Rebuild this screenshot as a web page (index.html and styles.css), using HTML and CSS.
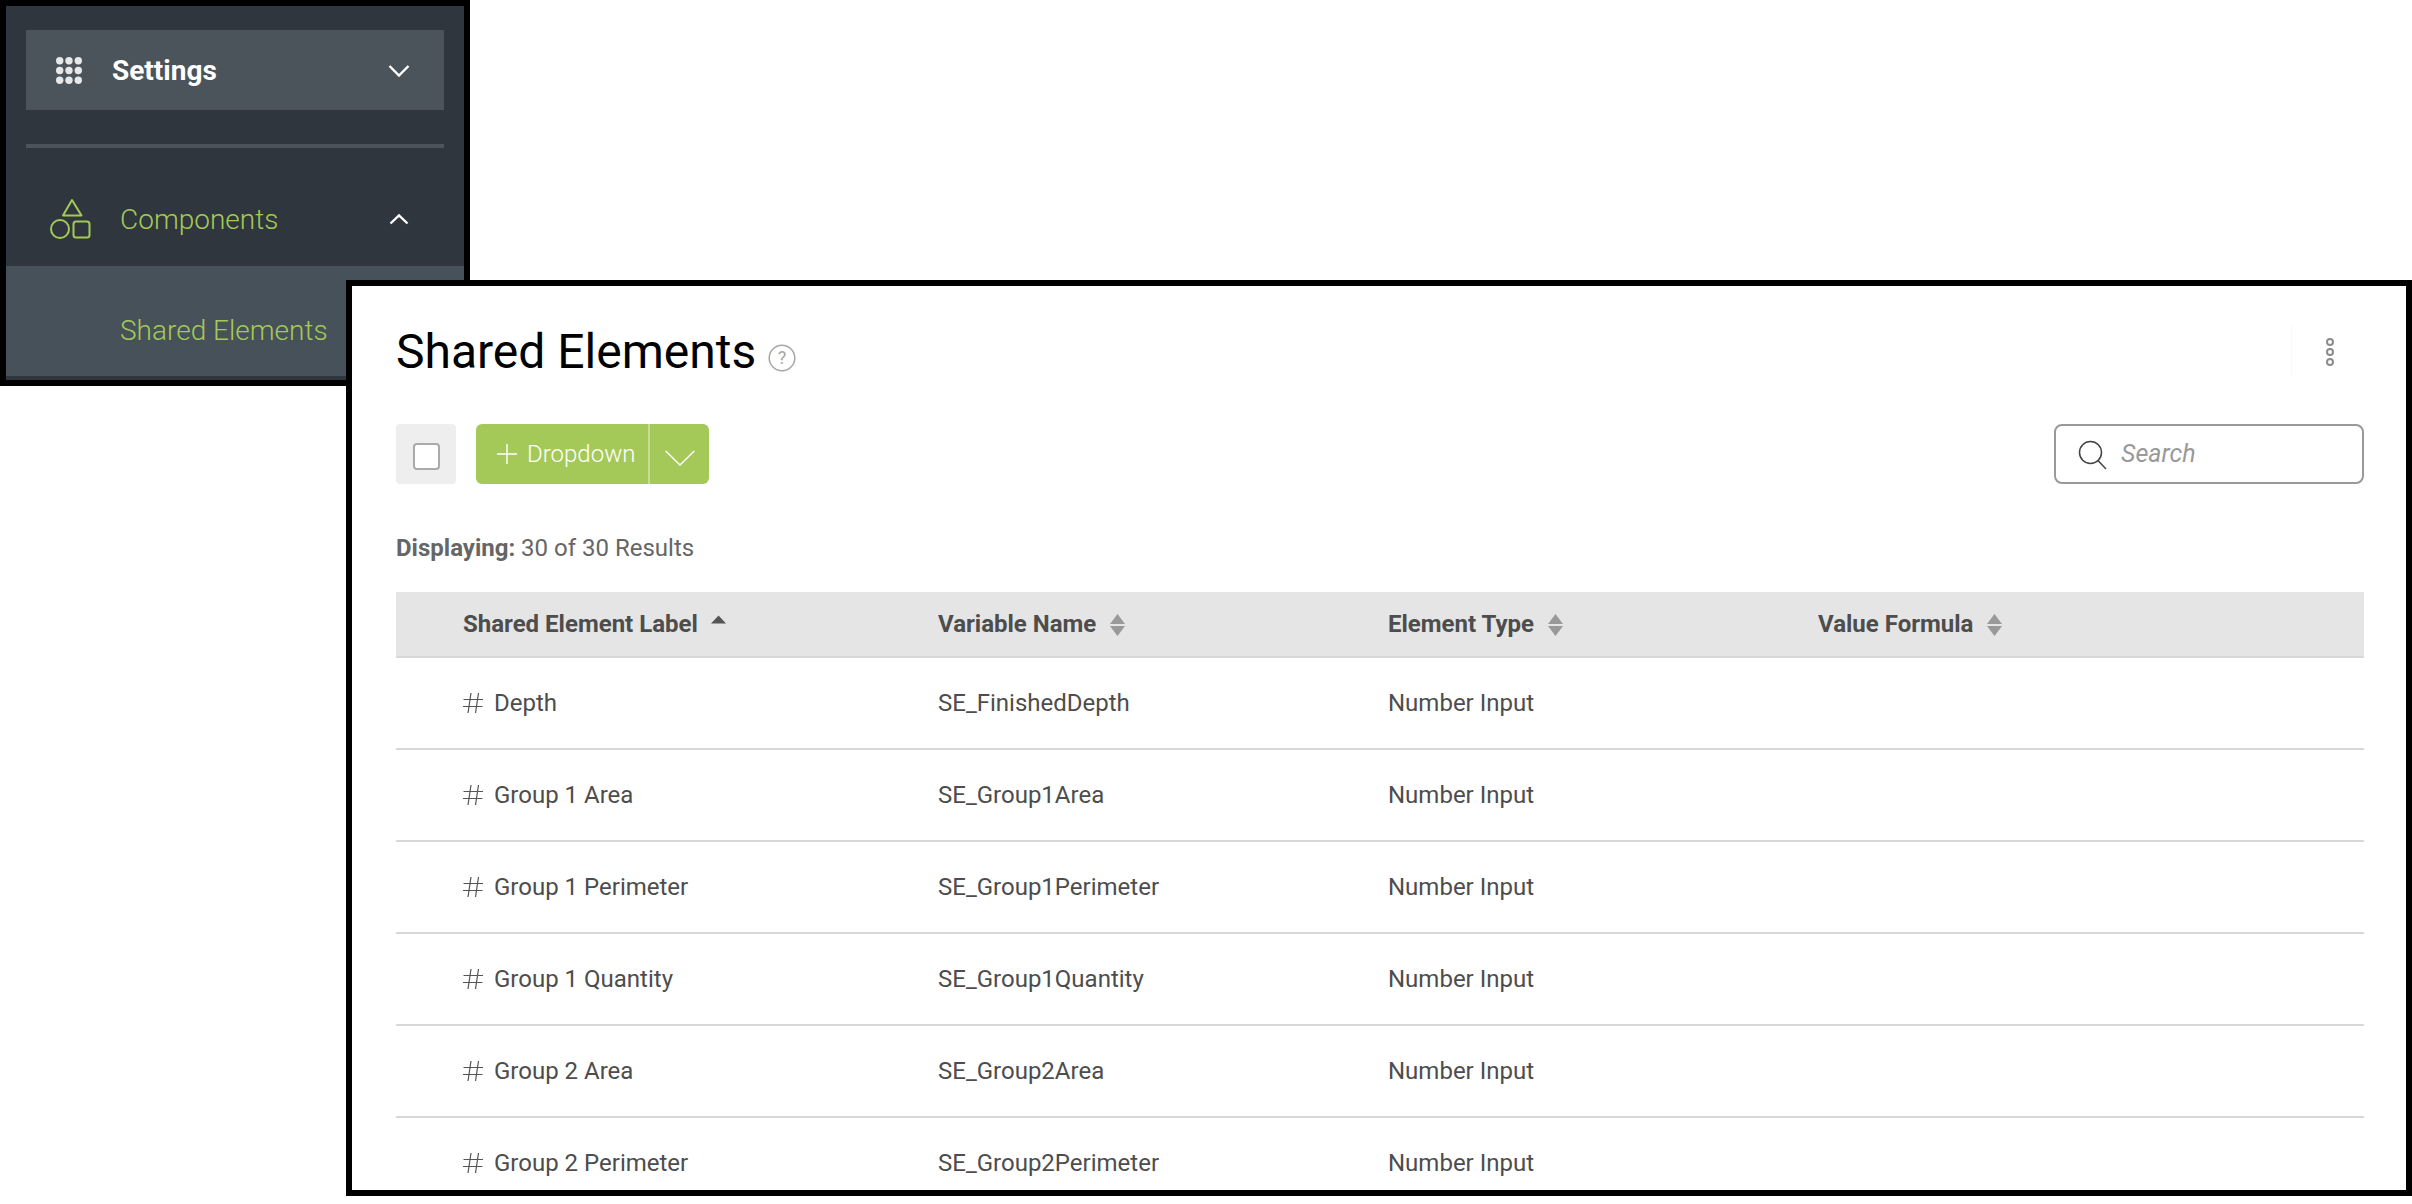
FILE: index.html
```html
<!DOCTYPE html>
<html lang="en">
<head>
<meta charset="utf-8">
<title>Shared Elements</title>
<link rel="stylesheet" href="styles.css">
</head>
<body>
<nav class="side">
  <div class="settings">
    <svg class="grid-icon" width="26" height="27" viewBox="0 0 26 27"><g fill="#e6e8e9"><circle cx="3.700" cy="3.700" r="3.700"/><circle cx="13" cy="3.700" r="3.700"/><circle cx="22.300" cy="3.700" r="3.700"/><circle cx="3.700" cy="13.500" r="3.700"/><circle cx="13" cy="13.500" r="3.700"/><circle cx="22.300" cy="13.500" r="3.700"/><circle cx="3.700" cy="23.300" r="3.700"/><circle cx="13" cy="23.300" r="3.700"/><circle cx="22.300" cy="23.300" r="3.700"/></g></svg>
    <span class="settings-label">Settings</span>
    <svg class="chev" width="22" height="14" viewBox="0 0 22 14"><path d="M1.500 2 11 11.500 20.500 2" fill="none" stroke="#fff" stroke-width="2.400"/></svg>
  </div>
  <div class="rule"></div>
  <div class="comp">
    <svg class="shapes" width="42" height="42" viewBox="0 0 42 42"><g fill="none" stroke="#a5c958" stroke-width="2"><path d="M23 2 32.500 17.500H14Z" stroke-linejoin="round"/><circle cx="11" cy="31" r="9"/><rect x="24.500" y="23.500" width="16" height="16" rx="2.500"/></g></svg>
    <span class="comp-label">Components</span>
    <svg class="chev-up" width="20" height="12" viewBox="0 0 20 12"><path d="M1.500 10.500 10 2.500 18.500 10.500" fill="none" stroke="#fff" stroke-width="2.400"/></svg>
  </div>
  <div class="sub"><span class="sub-label">Shared Elements</span></div>
</nav>

<main class="panel">
  <header class="title-row">
    <h1 class="title">Shared Elements</h1>
    <svg class="help" width="28" height="28" viewBox="0 0 28 28"><circle cx="14" cy="14" r="12.800" fill="none" stroke="#a6a6a6" stroke-width="1.500"/><text x="14" y="20" text-anchor="middle" class="help-q">?</text></svg>
    <div class="more">
      <svg width="10" height="30" viewBox="0 0 10 30"><g fill="none" stroke="#8c8c8c" stroke-width="2"><circle cx="5" cy="5" r="3"/><circle cx="5" cy="15" r="3"/><circle cx="5" cy="25" r="3"/></g></svg>
    </div>
  </header>
  <div class="tools">
    <div class="check-wrap"><span class="check"></span></div>
    <div class="btn">
      <div class="btn-main">
        <svg width="20" height="20" viewBox="0 0 20 20"><path d="M10 0V20M0 10H20" stroke="#fff" stroke-width="1.400" fill="none"/></svg>
        <span>Dropdown</span>
      </div>
      <div class="btn-caret">
        <svg width="30" height="16" viewBox="0 0 30 16"><path d="M.7 1 15 15 29.300 1" fill="none" stroke="#fff" stroke-width="1.500"/></svg>
      </div>
    </div>
    <div class="search">
      <svg width="30" height="30" viewBox="0 0 30 30"><circle cx="12.500" cy="12.500" r="11" fill="none" stroke="#444" stroke-width="1.500"/><path d="M20 20.500 28 29" stroke="#444" stroke-width="1.500" fill="none"/></svg>
      <span class="search-text">Search</span>
    </div>
  </div>
  <p class="count"><b>Displaying:</b> 30 of 30 Results</p>
  <div class="thead row-grid">
    <div class="th">Shared Element Label <svg class="sort-one" width="15" height="9" viewBox="0 0 15 9"><path d="M7.500 .5 15 8.500H0Z" fill="#555"/></svg></div>
    <div class="th">Variable Name <svg class="sort" width="15" height="22" viewBox="0 0 15 22"><path d="M7.500 0 15 10H0ZM7.500 22 0 12H15Z" fill="#999"/></svg></div>
    <div class="th">Element Type <svg class="sort" width="15" height="22" viewBox="0 0 15 22"><path d="M7.500 0 15 10H0ZM7.500 22 0 12H15Z" fill="#999"/></svg></div>
    <div class="th">Value Formula <svg class="sort" width="15" height="22" viewBox="0 0 15 22"><path d="M7.500 0 15 10H0ZM7.500 22 0 12H15Z" fill="#999"/></svg></div>
  </div>
  <div class="tr row-grid"><div class="td"><svg class="hash" width="20" height="20" viewBox="0 0 20 20"><use href="#h"/></svg>Depth</div><div class="td">SE_FinishedDepth</div><div class="td">Number Input</div><div class="td"></div></div>
  <div class="tr row-grid"><div class="td"><svg class="hash" width="20" height="20" viewBox="0 0 20 20"><use href="#h"/></svg>Group 1 Area</div><div class="td">SE_Group1Area</div><div class="td">Number Input</div><div class="td"></div></div>
  <div class="tr row-grid"><div class="td"><svg class="hash" width="20" height="20" viewBox="0 0 20 20"><use href="#h"/></svg>Group 1 Perimeter</div><div class="td">SE_Group1Perimeter</div><div class="td">Number Input</div><div class="td"></div></div>
  <div class="tr row-grid"><div class="td"><svg class="hash" width="20" height="20" viewBox="0 0 20 20"><use href="#h"/></svg>Group 1 Quantity</div><div class="td">SE_Group1Quantity</div><div class="td">Number Input</div><div class="td"></div></div>
  <div class="tr row-grid"><div class="td"><svg class="hash" width="20" height="20" viewBox="0 0 20 20"><use href="#h"/></svg>Group 2 Area</div><div class="td">SE_Group2Area</div><div class="td">Number Input</div><div class="td"></div></div>
  <div class="tr row-grid"><div class="td"><svg class="hash" width="20" height="20" viewBox="0 0 20 20"><use href="#h"/></svg>Group 2 Perimeter</div><div class="td">SE_Group2Perimeter</div><div class="td">Number Input</div><div class="td"></div></div>
</main>
<svg class="defs" width="0" height="0"><defs><path id="h" d="M8 0 5 20M15.500 0 12.500 20M.5 6.500H20M0 13.500H19.500" stroke="#555" stroke-width="1.200" fill="none"/></defs></svg>
</body>
</html>
```
FILE: styles.css
```css
* { box-sizing: border-box; }
html, body { margin: 0; padding: 0; background: #fff; }
body {
  width: 2412px;
  height: 1204px;
  overflow: hidden;
  position: relative;
  font-family: Roboto, "Liberation Sans", sans-serif;
}
.side {
  width: 470px;
  height: 386px;
  border: 6px solid #000;
  background: #2f363d;
  padding-top: 24px;
}
.settings {
  margin: 0 20px;
  height: 80px;
  background: #4c545b;
  display: flex;
  align-items: center;
  padding: 0 34px 0 30px;
}
.settings-label {
  margin-left: 30px;
  flex: 1;
  font-size: 28px;
  font-weight: 700;
  color: #fff;
}
.chev { display: block; margin-top: 2px; }
.rule { margin: 34px 20px 0; height: 4px; background: #4c545b; }
.comp {
  height: 118px;
  display: flex;
  align-items: center;
  padding: 24px 55px 0 43px;
}
.shapes { display: block; }
.comp-label {
  margin-left: 29px;
  flex: 1;
  font-size: 28px;
  font-weight: 300;
  color: #a5c958;
}
.sub {
  height: 110px;
  background: #465159;
  display: flex;
  align-items: center;
  padding: 18px 0 0 114px;
}
.sub-label { font-size: 28px; font-weight: 300; color: #a5c958; }

.panel {
  position: absolute;
  left: 346px;
  top: 280px;
  width: 2066px;
  height: 916px;
  border: 6px solid #000;
  background: #fff;
  overflow: hidden;
  padding: 0 42px 0 44px;
}
.title-row {
  height: 138px;
  padding-bottom: 8px;
  display: flex;
  align-items: center;
}
.title {
  margin: 0;
  font-size: 48px;
  font-weight: 400;
  color: #000;
}
.help { margin-left: 12px; margin-top: 13px; display: block; }
.help-q { font-family: Roboto, sans-serif; font-size: 18px; fill: #a6a6a6; }
.more {
  margin-left: auto;
  height: 50px;
  padding: 0 29px 0 33px;
  border-left: 1px solid #f8f8f8;
  display: flex;
  align-items: center;
}
.more svg { display: block; margin-top: 1px; }
.tools { display: flex; align-items: center; height: 60px; }
.check-wrap {
  width: 60px;
  height: 60px;
  background: #eee;
  border-radius: 4px;
  display: flex;
  align-items: center;
  justify-content: center;
}
.check {
  width: 27px;
  height: 27px;
  margin-top: 5px;
  background: #fff;
  border: 2px solid #aaa;
  border-radius: 4px;
}
.btn {
  margin-left: 20px;
  width: 233px;
  height: 60px;
  background: #a5c958;
  border-radius: 6px;
  display: flex;
  color: #fff;
}
.btn-main {
  width: 174px;
  display: flex;
  align-items: center;
  padding-left: 21px;
  border-right: 2px solid #c6dd92;
  font-size: 24px;
  font-weight: 300;
}
.btn-main span { margin-left: 10px; }
.btn-main svg, .btn-caret svg { display: block; }
.btn-caret { flex: 1; display: flex; align-items: center; justify-content: center; padding-top: 8px; }
.search {
  margin-left: auto;
  width: 310px;
  height: 60px;
  border: 2px solid #999;
  border-radius: 8px;
  display: flex;
  align-items: center;
  padding-left: 22px;
}
.search svg { display: block; margin-top: 2px; }
.search-text {
  margin-left: 13px;
  margin-bottom: 2px;
  font-size: 25px;
  font-style: italic;
  color: #999;
}
.count {
  margin: 50px 0 0;
  height: 28px;
  line-height: 28px;
  font-size: 24px;
  color: #666;
}
.count b { font-weight: 700; }
.row-grid {
  display: grid;
  grid-template-columns: 475px 450px 430px 1fr;
  padding-left: 67px;
  align-items: center;
}
.thead {
  margin-top: 30px;
  height: 66px;
  background: #e5e5e5;
  border-bottom: 2px solid #d8d8d8;
}
.th {
  font-size: 24px;
  font-weight: 700;
  color: #4d4d4d;
  display: flex;
  align-items: center;
  gap: 10px;
}
.sort-one { display: block; margin-top: -10px; margin-left: 3px; }
.sort { display: block; margin-left: 4px; margin-top: 1px; }
.tr { height: 92px; border-bottom: 2px solid #d8d8d8; }
.td {
  font-size: 24px;
  color: #4d4d4d;
  display: flex;
  align-items: center;
}
.hash { display: block; margin-right: 11px; }
.defs { position: absolute; }
```
